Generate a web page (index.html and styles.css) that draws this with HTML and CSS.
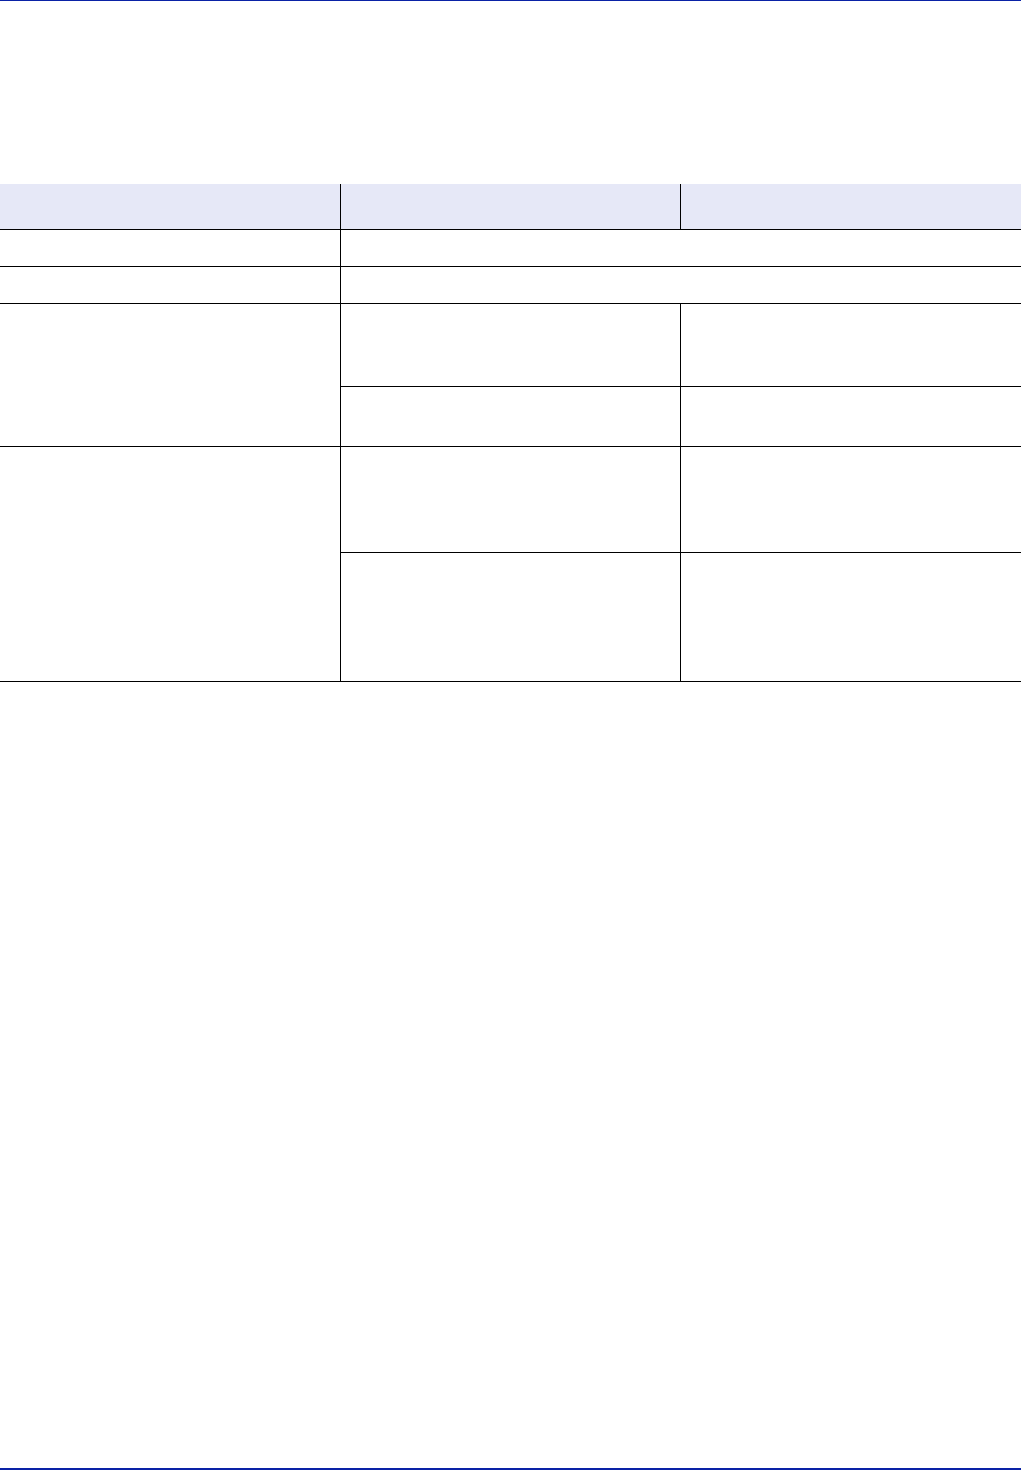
FILE: index.html
```html
<!DOCTYPE html>
<html lang="en">

<head>
    <meta charset="utf-8">
    <meta name="viewport" content="width=device-width, initial-scale=1.0">
    <title></title>
    <link rel="stylesheet" href="styles.css">
</head>

<body>
    <div class="side">
        <div class="topline"></div>

        <!-- tabel uden tekst -->
        <div class="tabel">
            <div class="celle hoved"></div>
            <div class="celle hoved"></div>
            <div class="celle hoved"></div>

            <div class="celle"></div>
            <div class="celle spand"></div>

            <div class="celle"></div>
            <div class="celle spand"></div>

            <div class="celle raekke3"></div>
            <div class="celle"></div>
            <div class="celle"></div>
            <div class="celle"></div>
            <div class="celle"></div>

            <div class="celle raekke4"></div>
            <div class="celle"></div>
            <div class="celle"></div>
            <div class="celle"></div>
            <div class="celle"></div>
        </div>

        <div class="bundlinje"></div>
    </div>
</body>

</html>
```

FILE: styles.css
```css
body {
    margin: 0;
    padding: 0;
    font-family: 'Liberation Sans', Arial, sans-serif;
}

.side {
    display: flex;
    flex-direction: column;
    min-height: 1470px;
}

.topline {
    height: 1px;
    background-color: #0a22a6;
}

.tabel {
    margin-top: 183px;
    display: grid;
    grid-template-columns: 340px 339px 340px;
    grid-template-rows: 45px 36px 36px 82px 59px 105px 128px;
    gap: 1px;
    background-color: #000000;
    padding-bottom: 1px;
}

.celle {
    background-color: #ffffff;
}

.hoved {
    background-color: #e6e8f7;
}

.spand {
    grid-column: span 2;
}

.raekke3,
.raekke4 {
    grid-row: span 2;
}

.bundlinje {
    margin-top: auto;
    margin-bottom: 0;
    height: 2px;
    background-color: #0a22a6;
}
```
